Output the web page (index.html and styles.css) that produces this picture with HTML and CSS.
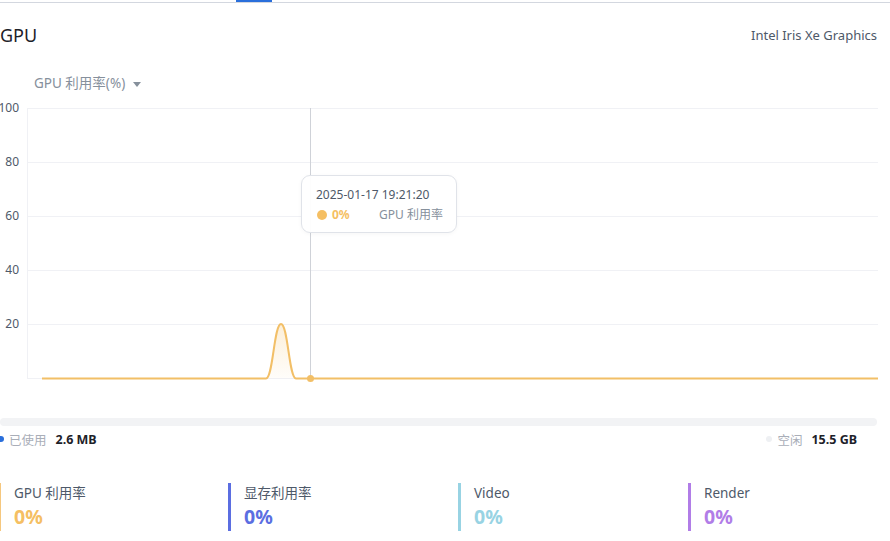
FILE: index.html
```html
<!DOCTYPE html>
<html lang="zh-CN">
<head>
  <meta charset="UTF-8">
  <title>GPU</title>
  <link rel="stylesheet" href="styles.css">
</head>
<body>

  <div class="tabs"><div class="tab-active"></div></div>

  <div class="page">
    <div class="header">
      <span class="title">GPU</span>
      <span class="device">Intel Iris Xe Graphics</span>
    </div>

    <div class="selector">GPU 利用率(%) <span class="caret"></span></div>

    <div class="chart">
      <svg width="880" height="300" viewBox="-2 100 880 300">
        <defs>
          <linearGradient id="fill" x1="0" y1="0" x2="0" y2="1">
            <stop offset="0" stop-color="#f5bf63" stop-opacity="0.25"/>
            <stop offset="1" stop-color="#f5bf63" stop-opacity="0.03"/>
          </linearGradient>
        </defs>
        <g stroke="#f0f1f5" stroke-width="1">
          <line x1="27" y1="108.5" x2="878" y2="108.5"/>
          <line x1="27" y1="162.5" x2="878" y2="162.5"/>
          <line x1="27" y1="216.5" x2="878" y2="216.5"/>
          <line x1="27" y1="270.5" x2="878" y2="270.5"/>
          <line x1="27" y1="324.5" x2="878" y2="324.5"/>
          <line x1="27" y1="378.5" x2="878" y2="378.5"/>
          <line x1="27.5" y1="108" x2="27.5" y2="379"/>
        </g>
        <g class="axis-label" text-anchor="end">
          <text x="19" y="112">100</text>
          <text x="19" y="166">80</text>
          <text x="19" y="220">60</text>
          <text x="19" y="274">40</text>
          <text x="19" y="328">20</text>
        </g>
        <path d="M266 378.5 C273 378.5 274 324 281 324 C288 324 289 378.5 296 378.5 Z" fill="url(#fill)"/>
        <path d="M42 378.5 L266 378.5 C273 378.5 274 324 281 324 C288 324 289 378.5 296 378.5 L878 378.5"
              fill="none" stroke="#f2bf67" stroke-width="2"/>
        <line x1="310.5" y1="108" x2="310.5" y2="379" stroke="#cfd2d8" stroke-width="1"/>
        <circle cx="310.5" cy="378.5" r="3.5" fill="#f2bf67"/>
      </svg>

      <div class="tooltip">
        <div class="tip-time">2025-01-17 19:21:20</div>
        <div class="tip-row">
          <span class="tip-dot"></span>
          <span class="tip-value">0%</span>
          <span class="tip-name">GPU 利用率</span>
        </div>
      </div>
    </div>

    <div class="usage-bar"></div>

    <div class="legend">
      <div class="legend-item">
        <span class="dot dot-used"></span>
        <span class="legend-label">已使用</span>
        <span class="legend-value">2.6 MB</span>
      </div>
      <div class="legend-item">
        <span class="dot dot-free"></span>
        <span class="legend-label">空闲</span>
        <span class="legend-value">15.5 GB</span>
      </div>
    </div>

    <div class="stats">
      <div class="stat stat-gpu">
        <div class="stat-label">GPU 利用率</div>
        <div class="stat-value">0%</div>
      </div>
      <div class="stat stat-mem">
        <div class="stat-label">显存利用率</div>
        <div class="stat-value">0%</div>
      </div>
      <div class="stat stat-video">
        <div class="stat-label">Video</div>
        <div class="stat-value">0%</div>
      </div>
      <div class="stat stat-render">
        <div class="stat-label">Render</div>
        <div class="stat-value">0%</div>
      </div>
    </div>
  </div>

</body>
</html>
```

FILE: styles.css
```css
html, body { margin: 0; padding: 0; background: #fff; }
body {
  font-family: "Noto Sans", "Noto Sans CJK SC", sans-serif;
  color: #1d2129;
  overflow: hidden;
  width: 890px;
  height: 541px;
}

.tabs {
  height: 2px;
  border-bottom: 1px solid #d3d7df;
}
.tab-active {
  margin-left: 236px;
  width: 36px;
  height: 2px;
  background: #2a6fdb;
}

.page {
  margin-left: -2px;
  width: 880px;
}

.header {
  height: 64px;
  display: flex;
  align-items: center;
  justify-content: space-between;
}
.title { font-size: 18px; color: #1d2129; margin-left: 2px; }
.device { font-size: 13px; color: #4e5969; margin-right: 1px; }

.selector {
  margin-top: 4px;
  height: 24px;
  line-height: 24px;
  padding-left: 36px;
  font-size: 13.5px;
  color: #86909c;
}
.caret {
  display: inline-block;
  margin-left: 4px;
  vertical-align: middle;
  border-left: 4px solid transparent;
  border-right: 4px solid transparent;
  border-top: 5px solid #86909c;
}

.chart {
  position: relative;
  margin-top: 5px;
  height: 300px;
}
.chart svg { display: block; }
.axis-label { font-size: 12px; fill: #4e5969; }

.tooltip {
  position: absolute;
  left: 303px;
  top: 75px;
  width: 156px;
  height: 58px;
  box-sizing: border-box;
  padding: 10px 14px;
  background: rgba(255, 255, 255, 0.95);
  border: 1px solid #e0e3e9;
  border-radius: 9px;
  box-shadow: 0 1px 4px rgba(0, 0, 0, 0.04);
  font-size: 12px;
  white-space: nowrap;
}
.tip-time { color: #4e5969; line-height: 18px; }
.tip-row { display: flex; align-items: center; margin-top: 2px; line-height: 18px; }
.tip-dot {
  flex: none;
  width: 10px; height: 10px;
  border-radius: 50%;
  background: #f5bf63;
  margin-left: 1px;
}
.tip-value { flex: none; color: #f5bf63; font-weight: bold; margin-left: 5px; width: 47px; }
.tip-name { flex: none; color: #86909c; }

.usage-bar {
  margin-top: 18px;
  margin-left: 2px;
  width: 877px;
  height: 8px;
  border-radius: 4px;
  background: #f2f3f5;
}

.legend {
  margin-top: 5px;
  height: 16px;
  display: flex;
  justify-content: space-between;
  padding-right: 21px;
  font-size: 12.5px;
}
.legend-item { display: flex; align-items: center; }
.dot { width: 6px; height: 6px; border-radius: 50%; margin-right: 5px; }
.dot-used { background: #2a6fdb; }
.dot-free { background: #eef0f3; }
.legend-label { color: #a9aeb8; margin-right: 9px; }
.legend-value { color: #1d2129; font-weight: bold; }

.stats {
  margin-top: 36px;
  display: grid;
  grid-template-columns: repeat(4, 230px);
}
.stat {
  height: 48px;
  border-left: 3px solid;
  padding-left: 13px;
  box-sizing: border-box;
}
.stat-label { font-size: 13.5px; color: #4e5969; line-height: 20px; }
.stat-value { font-size: 19.5px; font-weight: bold; line-height: 28px; }

.stat-gpu { border-color: #f5c77e; }
.stat-gpu .stat-value { color: #f5bf63; }
.stat-mem { border-color: #5b6ee1; }
.stat-mem .stat-value { color: #5b6ee1; }
.stat-video { border-color: #98d3e3; }
.stat-video .stat-value { color: #98d3e3; }
.stat-render { border-color: #b17de7; }
.stat-render .stat-value { color: #b17de7; }
```
